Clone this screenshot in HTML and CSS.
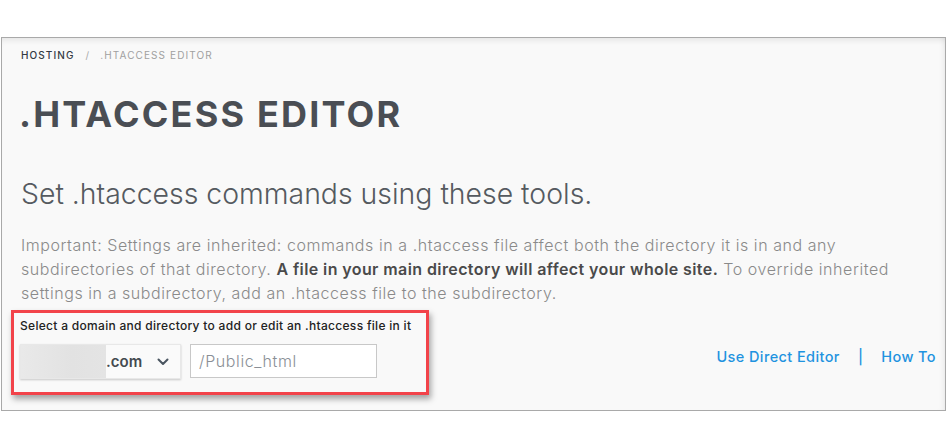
FILE: index.html
```html
<!DOCTYPE html>
<html>
<head>
<meta charset="utf-8">
<link rel="stylesheet" href="styles.css">
</head>
<body>
<div class="frame">
  <nav class="crumbs"><span class="crumb-root">HOSTING</span><span class="crumb-sep">/</span><span class="crumb-cur">.HTACCESS EDITOR</span></nav>
  <h1 class="title">.HTACCESS EDITOR</h1>
  <h2 class="subtitle">Set .htaccess commands using these tools.</h2>
  <p class="info">Important: Settings are inherited: commands in a .htaccess file affect both the directory it is in and any subdirectories of that directory. <strong>A file in your main directory will affect your whole site.</strong> To override inherited settings in a subdirectory, add an .htaccess file to the subdirectory.</p>
  <div class="toolbar">
    <div class="picker">
      <div class="picker-label">Select a domain and directory to add or edit an .htaccess file in it</div>
      <div class="picker-row">
        <div class="domain">
          <span class="blur"></span><span class="domain-tld">.com</span>
          <svg class="chev" width="12" height="8" viewBox="0 0 12 8"><path d="M1.5 1.5 L6 6 L10.5 1.5" fill="none" stroke="#4a5560" stroke-width="2" stroke-linecap="round" stroke-linejoin="round"/></svg>
        </div>
        <div class="dir">/Public_html</div>
      </div>
    </div>
    <div class="links"><a class="link">Use Direct Editor</a><span class="pipe">|</span><a class="link">How To</a></div>
  </div>
</div>
</body>
</html>
```
FILE: styles.css
```css
html, body { margin: 0; padding: 0; background: #fff; }
body { font-family: "Inter", "DejaVu Sans", sans-serif; padding: 37px 1px 0 1px; }
.frame {
  width: 945px;
  height: 374px;
  box-sizing: border-box;
  border: 1px solid #a9a9a9;
  background: #f9f9f9;
  box-shadow: inset 0 6px 6px -4px rgba(0,0,0,0.09), inset -6px 0 6px -5px rgba(0,0,0,0.08);
  padding: 10px 0 0 19px;
  overflow: hidden;
}
.crumbs { font-size: 10px; letter-spacing: 1.1px; font-weight: 500; height: 14px; line-height: 14px; }
.crumb-root { color: #333a44; }
.crumb-sep { color: #aaa; margin: 0 10px 0 11px; font-weight: 400; }
.crumb-cur { color: #a0a0a0; font-weight: 400; }
.title {
  margin: 31px 0 0 -2px;
  font-size: 36px;
  line-height: 42px;
  font-weight: 700;
  letter-spacing: 2.2px;
  color: #4a4e54;
}
.subtitle {
  margin: 43px 0 0 0;
  font-size: 28.4px;
  line-height: 32px;
  font-weight: 300;
  color: #555a60;
}
.info {
  margin: 23px 0 0 0;
  font-size: 16px;
  line-height: 24px;
  font-weight: 300;
  letter-spacing: 0.56px;
  color: #8a8a8a;
  width: 910px;
}
.info strong { font-weight: 600; color: #4a4a4a; letter-spacing: 0.4px; }
.toolbar { display: flex; align-items: flex-start; margin-top: 5px; }
.picker {
  margin-left: -10px;
  border: 3px solid #f2434a;
  box-sizing: border-box;
  height: 85px;
  width: 418px;
  padding: 5px 0 0 6px;
  box-shadow: 2px 4px 6px rgba(0,0,0,0.35);
}
.picker-label { font-size: 12px; line-height: 16px; font-weight: 500; letter-spacing: 0.3px; color: #222; }
.picker-row { display: flex; gap: 9px; margin-top: 10px; }
.domain {
  width: 161px; height: 35px; box-sizing: border-box;
  background: #fafafa;
  border: 1px solid #e8e8e8;
  box-shadow: 0 1px 2px rgba(0,0,0,0.2);
  display: flex; align-items: center;
}
.blur { width: 85px; height: 100%; background: linear-gradient(90deg, #e9e9e9, #e2e2e2 60%, #e4e4e4); }
.domain-tld { font-size: 15px; font-weight: 600; color: #444a50; }
.chev { margin-left: auto; margin-right: 11px; }
.dir {
  width: 187px; height: 34px; box-sizing: border-box;
  background: #fff; border: 1px solid #c8c8c8;
  font-size: 16px; font-weight: 300; color: #8a8f96; letter-spacing: 0.6px;
  line-height: 32px; padding-left: 8px;
}
.links { margin-left: auto; margin-top: 38px; margin-right: 9px; display: flex; align-items: center; font-size: 14.5px; font-weight: 500; letter-spacing: 0.4px; }
.link { color: #1f93e0; }
.pipe { color: #1f93e0; margin: 0 18px 0 18px; }
```
